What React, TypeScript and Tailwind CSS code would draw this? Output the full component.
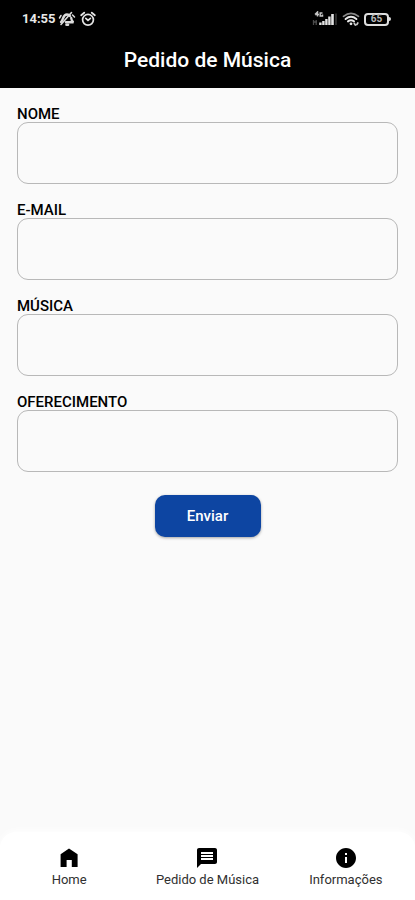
import React from 'react';
import { MdInfo, MdMessage } from 'react-icons/md';

const fields = [
    { id: 'nome', label: 'NOME', type: 'text' },
    { id: 'email', label: 'E-MAIL', type: 'email' },
    { id: 'musica', label: 'MÚSICA', type: 'text' },
    { id: 'oferecimento', label: 'OFERECIMENTO', type: 'text' },
];

const BellOffIcon = () => (
    <svg viewBox="0 0 18 16" className="h-4 w-[18px]" fill="none" stroke="#dcdcdc" strokeLinecap="round">
        <path d="M3 11 C5.5 9.5 4.5 3.5 9 3.5 C10.5 3.5 11.5 4 12 5" strokeWidth="2.4" />
        <path d="M13.2 7 C13.4 9.2 14 10.4 15.5 11.2 H8" strokeWidth="2.4" />
        <path d="M8.5 13.8 H10" strokeWidth="2.6" />
        <path d="M3 13.5 L13.5 1.5" strokeWidth="1.6" />
        <path d="M1.5 7 L3 4.5 M14.5 4 L16.5 6" strokeWidth="1.5" />
    </svg>
);

const AlarmIcon = () => (
    <svg viewBox="0 0 16 16" className="h-4 w-4" fill="none" stroke="#e4e4e4" strokeLinecap="round">
        <circle cx="8" cy="8.8" r="5.4" strokeWidth="1.7" />
        <path d="M1.2 4.2 L4.2 1.7 M14.8 4.2 L11.8 1.7" strokeWidth="1.8" />
        <path d="M5.8 7.4 L8 9.4 L10.4 7.4" strokeWidth="1.7" />
    </svg>
);

const SignalIcon = () => (
    <svg viewBox="0 0 26 16" className="h-4 w-[26px]">
        <path d="M3 3.5 L5.5 1 V5.5 M3 3.5 H7 M10.5 2 H8.2 V5 H10.5 V3.5" fill="none" stroke="#c4c4c4" strokeWidth="1.5" />
        <path d="M1.5 9 V14 M4.2 9 V14 M1 11 H5" fill="none" stroke="#4c4c4c" strokeWidth="1.3" />
        <path d="M7.2 11.5h2.4V14h-2.4zM10.2 10h2.4v4h-2.4zM13.2 8h2.4v6h-2.4zM16.2 5.5h2.4V14h-2.4zM19.2 3h2.6v11h-2.6z" fill="#e4e4e4" />
        <path d="M24 2.5 V14" stroke="#555555" strokeWidth="1" />
    </svg>
);

const WifiIcon = () => (
    <svg viewBox="0 0 18 16" className="h-4 w-[18px]" fill="none" strokeLinecap="round">
        <path d="M1.5 5.3 Q9 -0.5 16.5 5.3" stroke="#8a8a8a" strokeWidth="1.7" />
        <path d="M3.6 8 Q9 3.6 14.4 8" stroke="#e8e8e8" strokeWidth="2" />
        <path d="M6 10.4 Q9 8.2 12 10.4" stroke="#e8e8e8" strokeWidth="2" />
        <circle cx="9" cy="12.8" r="1.4" fill="#e8e8e8" />
        <path d="M12.3 12.5 L13.3 14 M15.8 12 L14.8 13.6" stroke="#cccccc" strokeWidth="1.7" />
    </svg>
);

const BatteryIcon = () => (
    <div className="flex items-center">
        <div className="flex h-[13px] w-[25px] items-center justify-center rounded-[4px] border-2 border-[#dedede]">
            <span className="text-[10px] leading-none font-bold text-[#b8b8b8]">65</span>
        </div>
        <div className="h-1 w-0.5 rounded-r-sm bg-[#dedede]" />
    </div>
);

const HomeIcon = () => (
    <svg viewBox="0 0 24 24" className="h-6 w-6" fill="#000000">
        <path d="M12 2.4 L20.6 8.2 V21 H14.8 V14 H9.6 V21 H3.6 V8.2 Z" />
    </svg>
);

const navItems = [
    { label: 'Home', icon: <HomeIcon /> },
    { label: 'Pedido de Música', icon: <MdMessage className="h-6 w-6" /> },
    { label: 'Informações', icon: <MdInfo className="h-6 w-6" /> },
];

const App: React.FC = () => {
    return (
        <div className="flex min-h-screen flex-col bg-[#fafafa] font-['Roboto',sans-serif] text-black">
            <header className="bg-black text-white">
                {/* Status bar */}
                <div className="flex h-8 items-end justify-between pr-6 pl-[22px]">
                    <div className="flex h-[26px] items-center gap-1">
                        <span className="w-8 text-[13px] leading-4 font-bold text-[#e8e8e8]">14:55</span>
                        <BellOffIcon />
                        <AlarmIcon />
                    </div>
                    <div className="flex h-[26px] items-center gap-1">
                        <SignalIcon />
                        <WifiIcon />
                        <BatteryIcon />
                    </div>
                </div>
                <div className="flex h-14 items-center justify-center">
                    <h1 className="text-[21px] leading-6 font-medium">Pedido de Música</h1>
                </div>
            </header>

            <main className="flex-1 px-4 pt-[18px]">
                <form className="flex flex-col" onSubmit={(e) => e.preventDefault()}>
                    <div className="flex flex-col gap-[18px] px-px">
                        {fields.map((field) => (
                            <div key={field.id} className="flex flex-col">
                                <label htmlFor={field.id} className="text-[15px] leading-4 font-medium">
                                    {field.label}
                                </label>
                                <input
                                    id={field.id}
                                    name={field.id}
                                    type={field.type}
                                    className="h-[62px] w-full rounded-[11px] border border-[#b8b8b8] px-3 text-base outline-none"
                                />
                            </div>
                        ))}
                    </div>
                    <button
                        type="submit"
                        className="mt-[23px] h-[42px] w-[106px] self-center rounded-[10px] bg-[#0d45a2] text-[15px] font-medium text-white shadow-[0_1px_3px_rgba(0,0,0,0.35)]"
                    >
                        Enviar
                    </button>
                </form>
            </main>

            <nav className="grid h-[68px] grid-cols-3 rounded-t-2xl bg-white shadow-[0_-2px_6px_rgba(255,255,255,0.8)]">
                {navItems.map((item) => (
                    <a key={item.label} href="#" className="flex flex-col items-center gap-0.5 pt-[14px]">
                        {item.icon}
                        <span className="text-[13px] leading-4 text-[#303030]">{item.label}</span>
                    </a>
                ))}
            </nav>
        </div>
    );
};

export default App;
